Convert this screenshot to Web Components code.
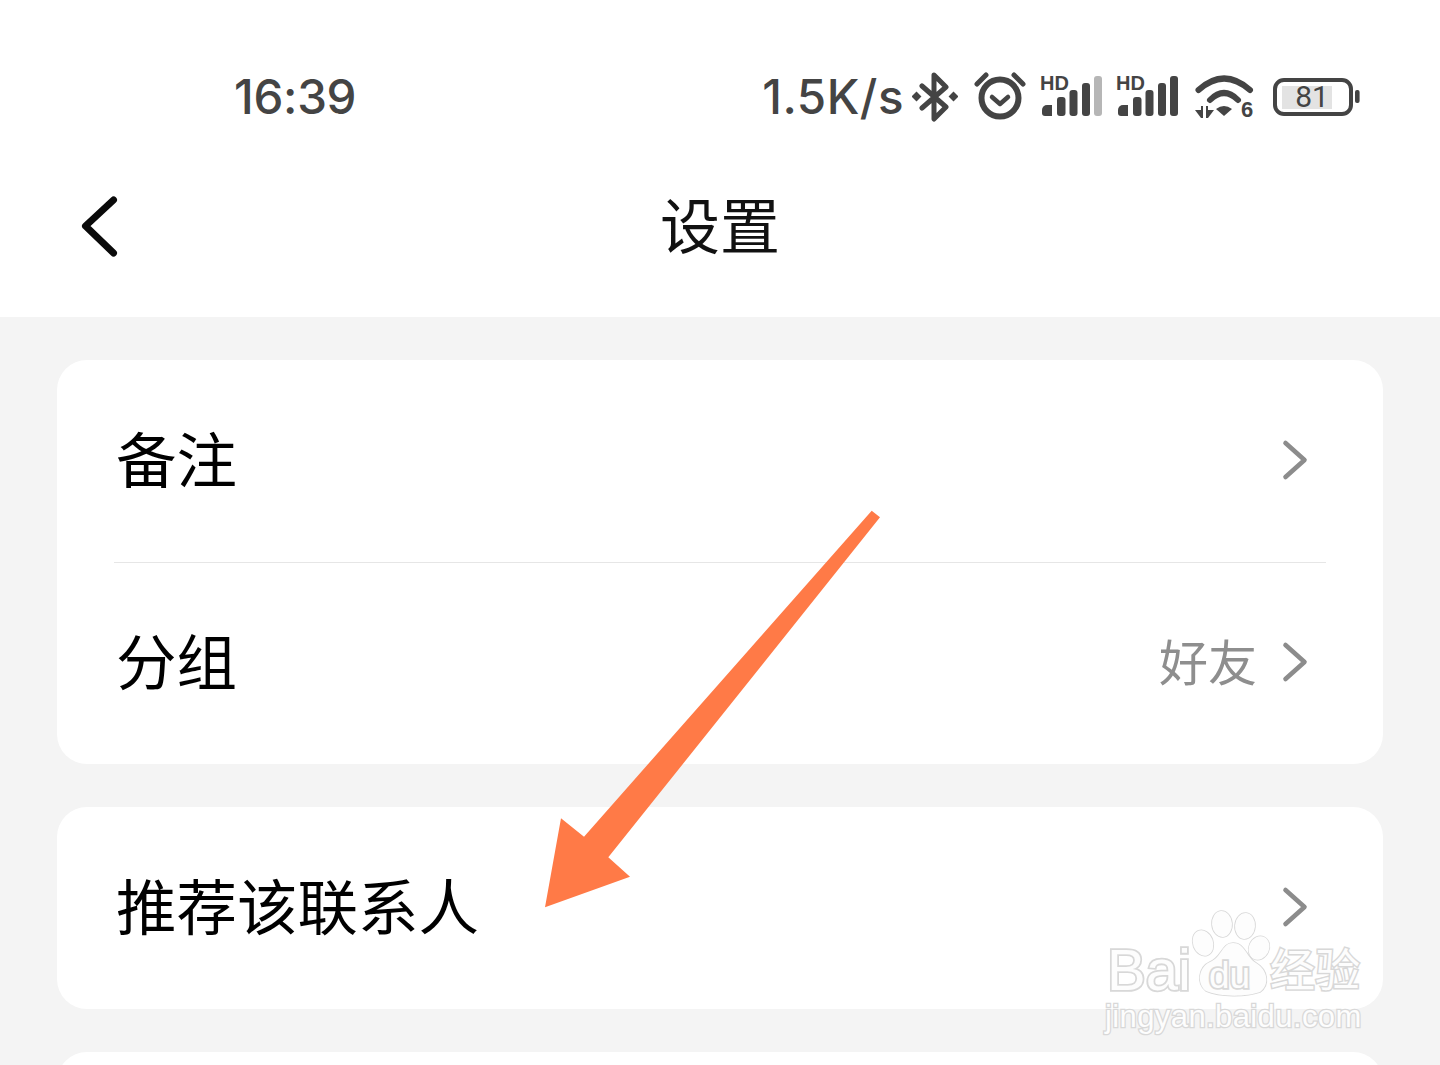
<!DOCTYPE html>
<html lang="zh">
<head>
<meta charset="utf-8">
<title>设置</title>
<style>
  html, body { margin: 0; background: #f4f4f4; }
  body { font-family: "Noto Sans CJK SC", "Noto Sans", sans-serif; }
  #page { position: relative; width: 1440px; height: 1065px; overflow: hidden; }
</style>
</head>
<body>
<div id="page">
  <status-bar></status-bar>
  <nav-bar>设置</nav-bar>
  <settings-list>
    <settings-card>
      <settings-row divider>备注</settings-row>
      <settings-row value="好友">分组</settings-row>
    </settings-card>
    <settings-card>
      <settings-row>推荐该联系人</settings-row>
    </settings-card>
    <settings-card></settings-card>
  </settings-list>
  <arrow-mark></arrow-mark>
  <baidu-mark></baidu-mark>
</div>

<script>
class StatusBar extends HTMLElement {
    constructor() {
        super();
        this.shadowDOM = this.attachShadow({mode: "open"});
    }

    signal(lastColor) {
        return `
        <span class="signal">
            <span class="hd">HD</span>
            <svg width="62" height="42" viewBox="0 0 62 42">
                <path d="M0 34a5 5 0 0 1 5-5h5v11H3a3 3 0 0 1-3-3z" fill="#444"/>
                <rect x="15" y="21" width="8.5" height="19" rx="3" fill="#444"/>
                <rect x="27.5" y="14" width="8" height="26" rx="3" fill="#444"/>
                <rect x="40" y="7" width="8" height="33" rx="3" fill="#444"/>
                <rect x="52" y="0" width="8" height="40" rx="3" fill="${lastColor}"/>
            </svg>
        </span>`;
    }

    connectedCallback() {
        this.shadowDOM.innerHTML = `
        <style>
            :host {
                display: flex;
                align-items: center;
                box-sizing: border-box;
                height: 150px;
                padding: 44px 79px 0 234px;
                background: #fff;
                color: #444;
                font-family: Inter, Roboto, sans-serif;
            }
            .time { font-size: 47.5px; font-weight: 500; line-height: 1; letter-spacing: -.3px; }
            .right { margin-left: auto; display: flex; align-items: center; height: 56px; }
            .speed { font-size: 47.5px; font-weight: 500; line-height: 1; margin-right: 8px; letter-spacing: .5px; }
            svg { display: block; flex: none; }
            .signal { position: relative; display: block; width: 62px; height: 42px; }
            .signal svg { position: absolute; left: 0; top: 0; }
            .hd {
                position: absolute; left: -2px; top: -3px; z-index: 1;
                font: 700 20px/20px "Liberation Sans", sans-serif;
            }
            .wifi { position: relative; width: 60px; height: 50px; }
            .six {
                position: absolute; left: 46px; top: 27px;
                font: 700 22px/22px "Liberation Sans", sans-serif;
            }
            .battery { position: relative; width: 88px; height: 38px; }
            .level {
                position: absolute; left: 0; top: 0; width: 78px; height: 38px;
                text-align: center;
                font: 30px/38px Roboto, sans-serif; color: #444;
            }
        </style>
        <span class="time">16:39</span>
        <div class="right">
            <span class="speed">1.5K/s</span>
            <svg width="46" height="50" viewBox="0 0 46 50" style="margin-right:16px">
                <path d="M10 14 L34 35 L22 47 V3 L34 15 L10 36" fill="none" stroke="#444" stroke-width="5" stroke-linejoin="round" stroke-linecap="round"/>
                <rect x="1" y="21" width="7" height="7" transform="rotate(45 4.5 24.5)" fill="#444"/>
                <rect x="38" y="21" width="7" height="7" transform="rotate(45 41.5 24.5)" fill="#444"/>
            </svg>
            <svg width="52" height="50" viewBox="0 0 52 50" style="margin-right:16px">
                <circle cx="26" cy="26" r="18.5" fill="none" stroke="#444" stroke-width="6"/>
                <path d="M18 25 L26 32 L34 25" fill="none" stroke="#444" stroke-width="4.5" stroke-linecap="round" stroke-linejoin="round"/>
                <path d="M3 12 L12 3 M40 3 L49 12" fill="none" stroke="#444" stroke-width="5" stroke-linecap="round"/>
            </svg>
            ${this.signal("#b6b6b6")}
            <span style="width:14px"></span>
            ${this.signal("#444")}
            <span style="width:15px"></span>
            <span class="wifi">
                <svg width="60" height="50" viewBox="0 0 60 50">
                    <path d="M3.5 18 Q29 -5 55 18" fill="none" stroke="#444" stroke-width="6" stroke-linecap="round"/>
                    <path d="M15 28 Q29 14 43 28" fill="none" stroke="#444" stroke-width="6" stroke-linecap="round"/>
                    <path d="M21 37 Q29 31 37 37 L29 44z" fill="#444"/>
                    <path d="M0 38 h6 v-4 h2 v12 h-2z M11 34 h2 v4 h6 l-6 8 h-2z" fill="#444"/>
                </svg>
                <span class="six">6</span>
            </span>
            <span style="width:18px"></span>
            <span class="battery">
                <svg width="88" height="38" viewBox="0 0 88 38">
                    <rect x="2" y="2" width="76" height="34" rx="9" fill="none" stroke="#444" stroke-width="4"/>
                    <rect x="9" y="8" width="50" height="23" fill="#e3e3e3"/>
                    <rect x="82" y="12" width="4.6" height="13" rx="2" fill="#444"/>
                </svg>
                <span class="level">81</span>
            </span>
        </div>`;
    }
}

class NavBar extends HTMLElement {
    constructor() {
        super();
        this.shadowDOM = this.attachShadow({mode: "open"});
    }

    connectedCallback() {
        this.shadowDOM.innerHTML = `
        <style>
            :host {
                display: grid;
                grid-template-columns: 1fr auto 1fr;
                align-items: center;
                box-sizing: border-box;
                height: 167px;
                padding: 0 80px 22px 80px;
                background: #fff;
                color: #111;
                font-size: 60px;
                line-height: 1;
            }
            svg { display: block; margin-top: 6px; }
        </style>
        <svg width="40" height="64" viewBox="0 0 40 64">
            <path d="M33.5 6 L5.5 32 L33.5 59" fill="none" stroke="#0a0a0a" stroke-width="7" stroke-linecap="round" stroke-linejoin="round"/>
        </svg>
        <slot></slot>
        <span></span>`;
    }
}

class SettingsList extends HTMLElement {
    constructor() {
        super();
        this.attachShadow({mode: "open"}).innerHTML = `
        <style>
            :host {
                display: flex;
                flex-direction: column;
                gap: 43px;
                padding: 43px 57px 0;
            }
        </style>
        <slot></slot>`;
    }
}

class SettingsCard extends HTMLElement {
    constructor() {
        super();
        this.attachShadow({mode: "open"}).innerHTML = `
        <style>
            :host {
                display: block;
                min-height: 202px;
                background: #fff;
                border-radius: 30px;
                overflow: hidden;
            }
        </style>
        <slot></slot>`;
    }
}

class SettingsRow extends HTMLElement {
    constructor() {
        super();
        this.shadowDOM = this.attachShadow({mode: "open"});
    }

    connectedCallback() {
        const value = this.getAttribute("value");
        this.shadowDOM.innerHTML = `
        <style>
            :host {
                display: flex;
                align-items: center;
                position: relative;
                box-sizing: border-box;
                height: 202px;
                padding: 0 74px 8px 59px;
                color: #000;
                font-size: 60.5px;
                line-height: 1;
            }
            :host([divider])::after {
                content: "";
                position: absolute;
                left: 57px;
                right: 57px;
                bottom: -1px;
                height: 1px;
                background: #e6e6e6;
            }
            .value { margin-left: auto; color: #8e8e8e; font-size: 49px; margin-right: 24px; }
            .go { margin-left: ${value ? "0" : "auto"}; display: block; margin-top: 5px; }
        </style>
        <slot></slot>
        ${value ? `<span class="value">${value}</span>` : ""}
        <svg class="go" width="28" height="42" viewBox="0 0 28 42">
            <path d="M4.5 4 L23.5 21 L4.5 38" fill="none" stroke="#8c8c8c" stroke-width="4.6" stroke-linecap="round" stroke-linejoin="round"/>
        </svg>`;
    }
}

class ArrowMark extends HTMLElement {
    constructor() {
        super();
        this.attachShadow({mode: "open"}).innerHTML = `
        <style>
            :host { position: absolute; left: 0; top: 0; pointer-events: none; }
            svg { display: block; }
        </style>
        <svg width="1440" height="1065" viewBox="0 0 1440 1065">
            <polygon fill="#ff7a47" points="871.7,510.7 880,517.3 608.3,857.3 630,876.7 545,907.3 561,818.3 584,836.7"/>
        </svg>`;
    }
}

class BaiduMark extends HTMLElement {
    constructor() {
        super();
        this.attachShadow({mode: "open"}).innerHTML = `
        <style>
            :host {
                position: absolute;
                left: 1100px;
                top: 905px;
                width: 270px;
                height: 135px;
                pointer-events: none;
                color: #fdfdfd;
                -webkit-text-stroke: 3.6px #d8d8d8;
                paint-order: stroke fill;
                font-family: "Liberation Sans", sans-serif;
            }
            span { position: absolute; line-height: 1; white-space: nowrap; }
            .bai { left: 7px; top: 36px; font-size: 58px; }
            .du { left: 109px; top: 52px; font-size: 37px; }
            .jing { left: 170px; top: 40px; font-size: 45px; font-family: "Noto Sans CJK SC", sans-serif; -webkit-text-stroke-width: 3px; }
            .url { left: 5px; top: 96px; font-size: 31px; -webkit-text-stroke-width: 2.6px; letter-spacing: .4px; }
            svg { position: absolute; left: 0; top: 0; }
        </style>
        <svg width="270" height="135" viewBox="0 0 270 135" fill="#fdfdfd" stroke="#d8d8d8" stroke-width="1.6">
            <ellipse cx="103" cy="38" rx="10" ry="13" transform="rotate(-20 103 38)"/>
            <ellipse cx="122" cy="19" rx="10" ry="13" transform="rotate(-5 122 19)"/>
            <ellipse cx="145" cy="21" rx="10" ry="13" transform="rotate(5 145 21)"/>
            <ellipse cx="159" cy="43" rx="10" ry="12" transform="rotate(25 159 43)"/>
            <path d="M106 86 C96 78 99 62 110 57 C122 52 122 38 133 38 C145 38 146 52 156 58 C168 65 170 80 160 87 C146 92 120 92 106 86 Z"/>
        </svg>
        <span class="bai">Bai</span>
        <span class="du">du</span>
        <span class="jing">经验</span>
        <span class="url">jingyan.baidu.com</span>`;
    }
}

customElements.define("status-bar", StatusBar);
customElements.define("nav-bar", NavBar);
customElements.define("settings-list", SettingsList);
customElements.define("settings-card", SettingsCard);
customElements.define("settings-row", SettingsRow);
customElements.define("arrow-mark", ArrowMark);
customElements.define("baidu-mark", BaiduMark);
</script>
</body>
</html>
